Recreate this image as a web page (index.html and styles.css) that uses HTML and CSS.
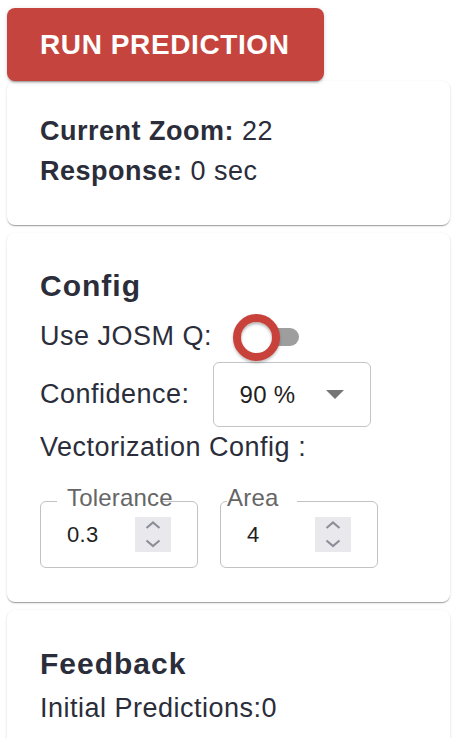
FILE: index.html
```html
<!DOCTYPE html>
<html lang="en">
<head>
<meta charset="utf-8">
<title>Prediction panel</title>
<link rel="stylesheet" href="styles.css">
</head>
<body>
<div class="panel">
  <button class="run-btn" type="button">RUN PREDICTION</button>

  <section class="card stats">
    <p><b>Current Zoom:</b> 22</p>
    <p><b>Response:</b> 0 sec</p>
  </section>

  <section class="card config">
    <h2>Config</h2>
    <div class="row switch-row">
      <span>Use JOSM Q:</span>
      <span class="switch"><span class="track"></span><span class="thumb"></span></span>
    </div>
    <div class="row select-row">
      <span>Confidence:</span>
      <div class="select">
        <span class="select-value">90 %</span>
        <span class="caret"></span>
      </div>
    </div>
    <p class="line">Vectorization Config :</p>
    <div class="fields">
      <div class="field field-tol">
        <span class="notch"></span>
        <span class="legend">Tolerance</span>
        <span class="value">0.3</span>
        <span class="spin">
          <svg width="36" height="35" viewBox="0 0 36 35"><path d="M11.5 11 L18 5.5 L24.5 11 M11.5 23.5 L18 29 L24.5 23.5" fill="none" stroke="#8e8e99" stroke-width="2.2"/></svg>
        </span>
      </div>
      <div class="field field-area">
        <span class="notch"></span>
        <span class="legend">Area</span>
        <span class="value">4</span>
        <span class="spin">
          <svg width="36" height="35" viewBox="0 0 36 35"><path d="M11.5 11 L18 5.5 L24.5 11 M11.5 23.5 L18 29 L24.5 23.5" fill="none" stroke="#8e8e99" stroke-width="2.2"/></svg>
        </span>
      </div>
    </div>
  </section>

  <section class="card feedback">
    <h2>Feedback</h2>
    <p class="line">Initial Predictions:0</p>
  </section>
</div>
</body>
</html>
```

FILE: styles.css
```css
* { box-sizing: border-box; }

html, body {
  margin: 0;
  background: #ffffff;
}

body {
  font-family: "Liberation Sans", Arial, sans-serif;
  color: #2b2e3a;
  font-size: 27px;
  letter-spacing: 0.5px;
}

.panel {
  width: 443px;
  margin-left: 7px;
  padding-top: 8px;
  display: flex;
  flex-direction: column;
}

.run-btn {
  position: relative;
  z-index: 1;
  align-self: flex-start;
  width: 317px;
  height: 73px;
  padding: 0 0 0 33px;
  text-align: left;
  border: none;
  border-radius: 8px;
  background: #c5443e;
  color: #ffffff;
  font-family: "Liberation Sans", Arial, sans-serif;
  font-weight: 700;
  font-size: 28px;
  letter-spacing: 0.6px;
  box-shadow: 0 3px 1px -2px rgba(0,0,0,.2), 0 2px 2px 0 rgba(0,0,0,.14), 0 1px 5px 0 rgba(0,0,0,.12);
}

.card {
  background: #ffffff;
  border-radius: 8px;
  box-shadow: 0 2px 1px -1px rgba(0,0,0,.2), 0 1px 1px 0 rgba(0,0,0,.14), 0 1px 3px 0 rgba(0,0,0,.12);
  padding: 0 33px;
}

.card + .card { margin-top: 8px; }

.card p {
  margin: 0;
  line-height: 40px;
}

.card b { font-weight: 700; }

.stats {
  padding-top: 30px;
  padding-bottom: 34px;
}

.card h2 {
  margin: 0 0 4px;
  font-size: 30px;
  line-height: 40px;
  font-weight: 700;
  letter-spacing: 1px;
}

.config {
  padding-top: 33px;
  padding-bottom: 34px;
}

.feedback {
  padding-top: 34px;
  height: 140px;
}

.row {
  display: flex;
  align-items: center;
}

.switch-row {
  height: 52px;
  gap: 21px;
}

.select-row {
  height: 65px;
  gap: 23px;
}

.switch {
  position: relative;
  width: 66px;
  height: 46px;
  display: flex;
  align-items: center;
  margin-top: 2px;
}

.track {
  position: absolute;
  left: 16px;
  right: 0;
  top: 14px;
  height: 18px;
  border-radius: 9px;
  background: #9e9e9e;
}

.thumb {
  position: relative;
  width: 47px;
  height: 47px;
  border-radius: 50%;
  border: 8.5px solid #c8413b;
  background: #ffffff;
  box-shadow: inset 0 2px 3px rgba(0,0,0,.3), 0 2px 3px rgba(0,0,0,.25);
}

.select {
  width: 158px;
  height: 65px;
  border: 1.5px solid #c4c4c4;
  border-radius: 6px;
  display: flex;
  align-items: center;
  padding-left: 26px;
  color: #1f1f1f;
}

.select-value {
  font-size: 24px;
  letter-spacing: 0.3px;
  width: 86px;
}

.caret {
  width: 0;
  height: 0;
  border-left: 9px solid transparent;
  border-right: 9px solid transparent;
  border-top: 9px solid #757575;
}

.fields {
  margin-top: 34px;
  display: flex;
  gap: 22px;
}

.field {
  position: relative;
  width: 158px;
  height: 67px;
  border: 1.5px solid #c2c2c2;
  border-radius: 6px;
  display: grid;
  grid-template-columns: 68px 36px;
  align-items: center;
  padding-left: 26px;
}

.notch {
  position: absolute;
  top: -3px;
  height: 5px;
  background: #ffffff;
}

.field-tol .notch { left: 16px; width: 103px; }
.field-area .notch { left: 6px; width: 70px; }

.legend {
  position: absolute;
  top: -16px;
  font-size: 24px;
  line-height: 24px;
  color: #666666;
  letter-spacing: 0.2px;
}

.field-tol .legend { left: 26px; }
.field-area .legend { left: 6px; }

.value {
  font-size: 22px;
  color: #1f1f1f;
  letter-spacing: 0.3px;
}

.spin {
  width: 36px;
  height: 35px;
  background: #e9e9ed;
  display: flex;
}
```
